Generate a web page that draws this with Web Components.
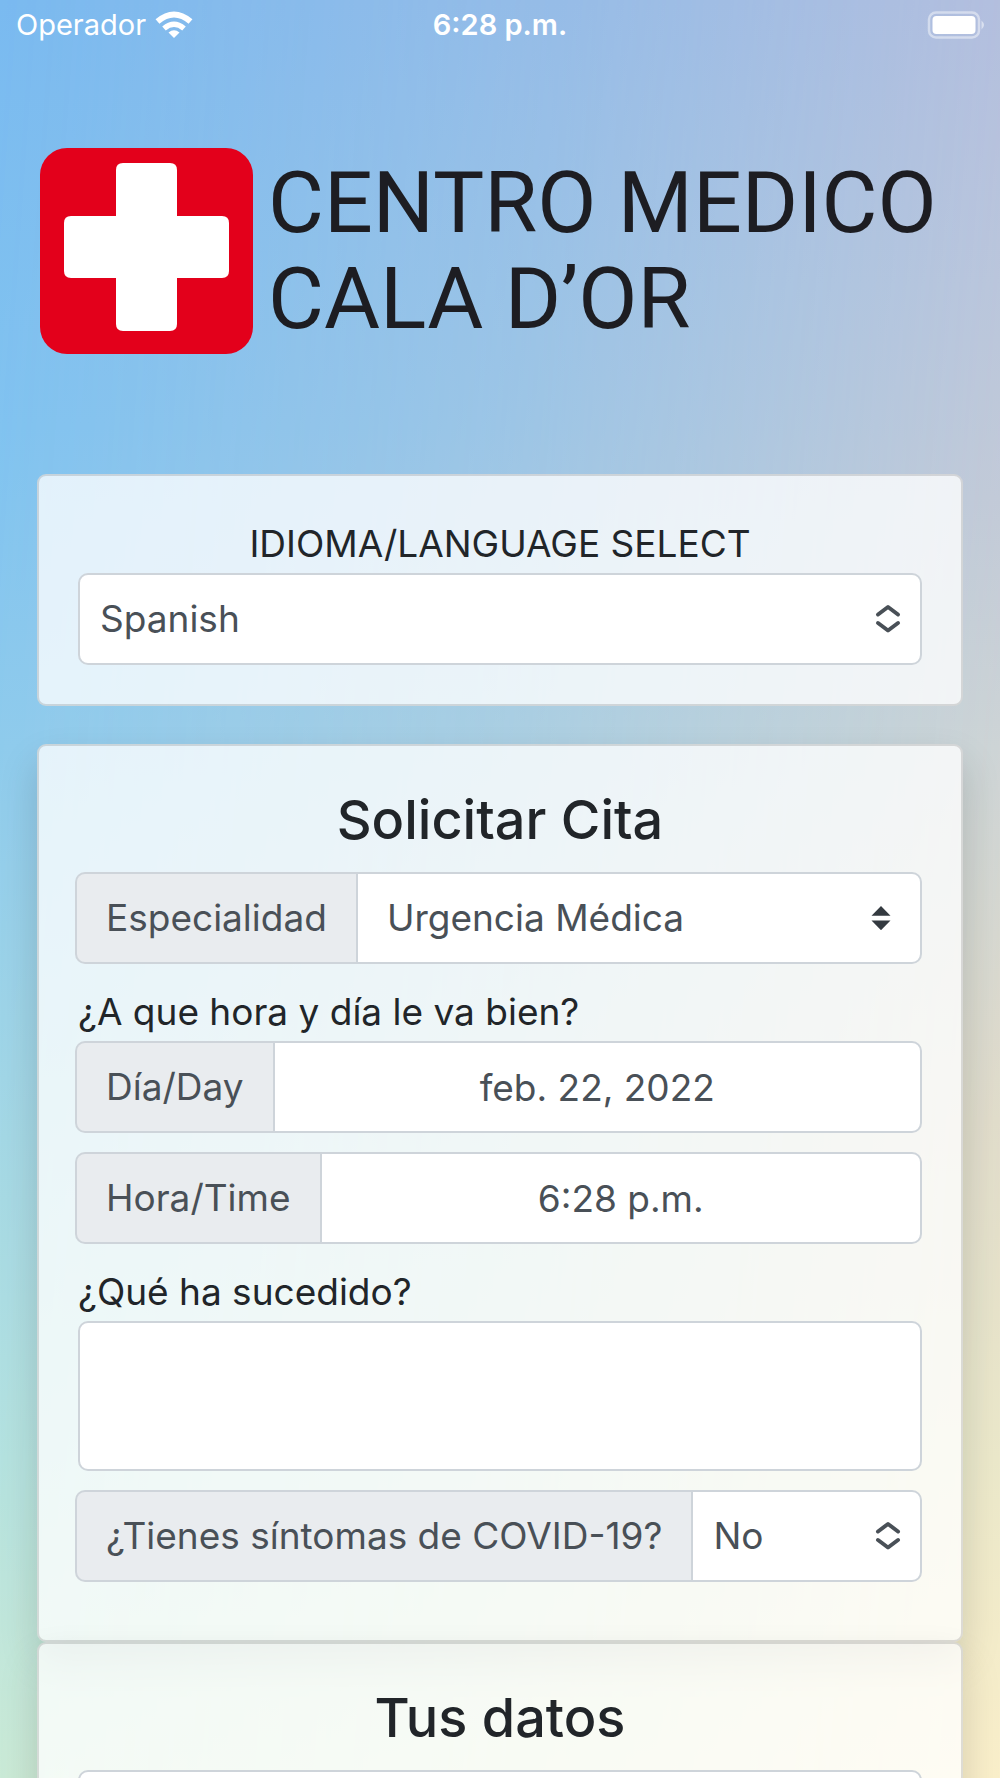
<!DOCTYPE html>
<html lang="es">
<head>
<meta charset="utf-8">
<meta name="viewport" content="width=device-width, initial-scale=1">
<title>Centro Medico Cala d'Or</title>
<style>
  body { margin: 0; font-family: Inter, "Noto Sans", sans-serif; font-size: 37px; line-height: 58px; color: #212529; }
</style>
</head>
<body>
<clinic-app>
  <status-bar slot="status" carrier="Operador" time="6:28 p.m."></status-bar>
  <clinic-logo slot="logo"></clinic-logo>
  <form-card class="flat">
    <select-field label="IDIOMA/LANGUAGE SELECT" options="Spanish,English,Deutsch"></select-field>
  </form-card>
  <form-card raised heading="Solicitar Cita">
    <group-field label="Especialidad" options="Urgencia Médica,Medicina General" icon="carets"></group-field>
    <question-text>¿A que hora y día le va bien?</question-text>
    <group-field label="Día/Day" value="feb. 22, 2022"></group-field>
    <group-field label="Hora/Time" value="6:28 p.m."></group-field>
    <text-field label="¿Qué ha sucedido?"></text-field>
    <group-field label="¿Tienes síntomas de COVID-19?" options="No,Sí" icon="chevrons"></group-field>
  </form-card>
  <form-card raised heading="Tus datos">
    <plain-input name="Nombre"></plain-input>
  </form-card>
</clinic-app>

<script>
const CONTROL = `
  *, *::before, *::after { box-sizing: border-box; }
  :host { display: block; }
  input, select, textarea {
    display: block; width: 100%; min-width: 0; height: 92px; margin: 0;
    font: inherit; color: #495057; background: #fff;
    border: 2px solid #ced4da; border-radius: 10px; padding: 0 20px;
    appearance: none; outline: none; resize: none;
  }
  textarea { height: 150px; padding: 14px 20px; }
  .pick { display: grid; align-items: center; }
  .pick > * { grid-area: 1 / 1; }
  .pick svg { justify-self: end; margin-right: 20px; pointer-events: none; display: block; }
`;
const ICONS = {
  chevrons: `<svg width="28" height="32" viewBox="0 0 28 32" fill="none" stroke="#495057" stroke-width="4" stroke-linecap="round" stroke-linejoin="round" aria-hidden="true"><path d="M4 11.500 14 4 24 11.500M4 20 14 27.500 24 20"/></svg>`,
  carets: `<svg class="carets" width="20" height="24" viewBox="0 0 20 24" fill="#343a40" aria-hidden="true"><path d="M10 0 19.500 9.700H.5ZM.5 14.500H19.500L10 24.200Z"/></svg>`
};

class Base extends HTMLElement {
  connectedCallback() {
    if (!this.shadowRoot) this.attachShadow({ mode: 'open' }).innerHTML = this.render();
  }
  attr(name) { return this.getAttribute(name) || ''; }
  picker(icon) {
    const items = this.attr('options').split(',').map(o => `<option>${o}</option>`).join('');
    return `<div class="pick"><select id="control">${items}</select>${ICONS[icon]}</div>`;
  }
}

customElements.define('clinic-app', class extends Base {
  render() {
    return `<style>
      :host { display: block; position: relative; isolation: isolate; height: 100vh; overflow-y: auto; scrollbar-width: none;
        background: linear-gradient(#7abaf0, #7fc3f1 24%, #8ccbee 42%, #a0d8e8 64%, #b0e2e2 82%, #c6ead8); }
      :host::before { content: ""; position: absolute; inset: 0; z-index: -1;
        background: linear-gradient(#b9bfdc, #bfc6da 16%, #c6cad6 28%, #d0d4d4 42%, #e2dcca 63%, #ebe8ca 82%, #faefca);
        mask-image: linear-gradient(94deg, transparent, rgba(0,0,0,.45) 50%, #000 97%); }
      main { display: flex; flex-direction: column; padding: 0 37px; }
      main ::slotted(.flat) { margin-bottom: 38px; }
    </style>
    <slot name="status"></slot>
    <main><slot name="logo"></slot><slot></slot></main>`;
  }
});

customElements.define('status-bar', class extends Base {
  render() {
    return `<style>
      :host { display: grid; grid-template-columns: 1fr auto 1fr; align-items: center; height: 50px; padding: 0 16px;
        color: #fff; font-size: 29px; line-height: 50px; }
      .left { display: flex; align-items: center; gap: 9px; }
      .time { font-weight: 600; }
      .battery { justify-self: end; }
      svg { display: block; }
    </style>
    <div class="left"><span>${this.attr('carrier')}</span>
      <svg width="38" height="28" viewBox="0 0 38 28" fill="none" stroke="#fff" aria-hidden="true">
        <path d="M2.500 10.500Q19-3.500 35.500 10.500" stroke-width="6"/>
        <path d="M9 17.500Q19 9 29 17.500" stroke-width="5.500"/>
        <path d="M13.500 21.500Q19 17 24.500 21.500L19 27Z" fill="#fff" stroke="none"/>
      </svg></div>
    <span class="time">${this.attr('time')}</span>
    <svg class="battery" width="57" height="28" viewBox="0 0 57 28" aria-hidden="true">
      <rect x="2" y="1.500" width="50" height="25" rx="7" fill="none" stroke="#fff" stroke-opacity=".45" stroke-width="2.500"/>
      <rect x="5.500" y="5" width="43" height="18" rx="4" fill="#fff"/>
      <path d="M54.500 9.500q5 4.500 0 9Z" fill="#fff" fill-opacity=".5"/>
    </svg>`;
  }
});

customElements.define('clinic-logo', class extends Base {
  render() {
    return `<style>
      :host { display: block; padding: 98px 0 120px; }
      svg { display: block; width: 100%; height: auto; }
      text { font-family: Roboto, "Liberation Sans", sans-serif; font-size: 86px; fill: #1d1d22; }
    </style>
    <svg viewBox="0 0 926 206" role="img" aria-label="Centro Medico Cala d'Or">
      <rect x="3" width="213" height="206" rx="27" fill="#e3001b"/>
      <path d="M86 15h47q7 0 7 7v46h45q7 0 7 7v48q0 7-7 7h-45v46q0 7-7 7H86q-7 0-7-7v-46H34q-7 0-7-7V75q0-7 7-7h45V22q0-7 7-7Z" fill="#fff"/>
      <text x="231" y="84">CENTRO MEDICO</text>
      <text x="231" y="180">CALA D’OR</text>
    </svg>`;
  }
});

customElements.define('form-card', class extends Base {
  render() {
    const h = this.attr('heading');
    return `<style>
      :host { display: flex; flex-direction: column; gap: 19px; padding: 39px; border: 2px solid rgba(0,0,0,.125); border-radius: 9px;
        background: rgba(255,255,255,.77); background-clip: border-box; }
      :host([raised]) { box-shadow: 0 19px 38px rgba(0,0,0,.15); padding-top: 40px; padding-bottom: 58px; }
      h2 { margin: 0; font-size: 54px; line-height: 67px; font-weight: 500; text-align: center; }
    </style>${h ? `<h2>${h}</h2>` : ''}<slot></slot>`;
  }
});

customElements.define('question-text', class extends Base {
  render() { return `<style>:host { display: block; margin-bottom: -19px; }</style><slot></slot>`; }
});

customElements.define('select-field', class extends Base {
  render() {
    return `<style>${CONTROL} label { display: block; text-align: center; }</style>
      <label for="control">${this.attr('label')}</label>${this.picker('chevrons')}`;
  }
});

customElements.define('text-field', class extends Base {
  render() {
    return `<style>${CONTROL} label { display: block; }</style>
      <label for="control">${this.attr('label')}</label><textarea id="control"></textarea>`;
  }
});

customElements.define('plain-input', class extends Base {
  render() { return `<style>${CONTROL}</style><input type="text" aria-label="${this.attr('name')}">`; }
});

customElements.define('group-field', class extends Base {
  render() {
    const icon = this.attr('icon');
    return `<style>${CONTROL}
      :host { display: flex; margin-left: -3px; }
      label { flex: none; height: 92px; line-height: 88px; padding: 0 29px; white-space: nowrap; color: #495057;
        background: #e9ecef; border: 2px solid #ced4da; border-right: 0; border-radius: 10px 0 0 10px; }
      input, .pick { flex: 1; min-width: 0; }
      input, select { border-radius: 0 10px 10px 0; }
      input { text-align: center; }
      .wide select { padding: 0 29px; }
      .pick .carets { margin-right: 31px; }
    </style>
    <label for="control">${this.attr('label')}</label>
    ${icon ? this.picker(icon).replace('class="pick"', `class="pick ${icon === 'carets' ? 'wide' : ''}"`)
           : `<input id="control" type="text" value="${this.attr('value')}">`}`;
  }
});
</script>
</body>
</html>
